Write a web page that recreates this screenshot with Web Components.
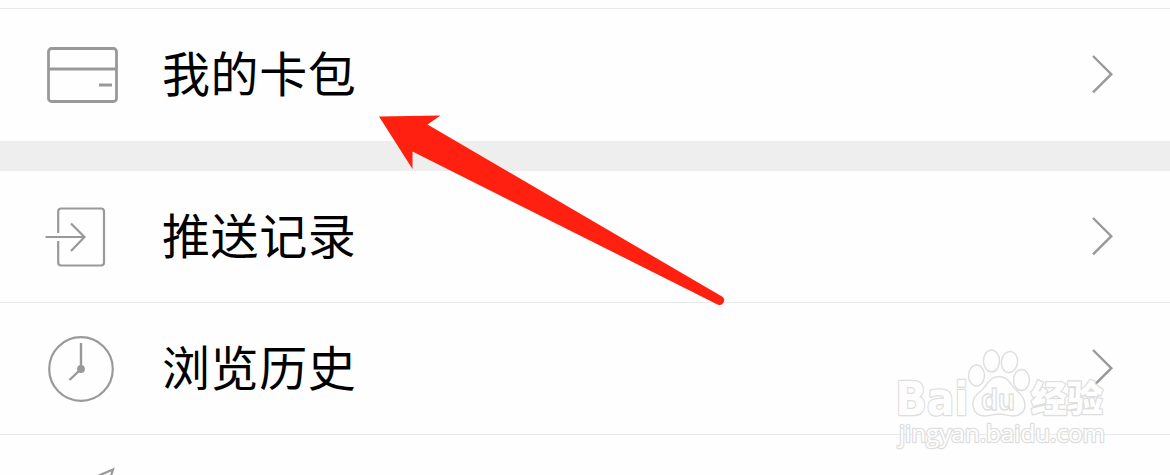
<!DOCTYPE html>
<html lang="zh-CN">

<head>
    <meta charset="UTF-8">
    <meta name="viewport" content="width=device-width, initial-scale=1.0">
    <title>我的卡包</title>
    <style>
        body {
            margin: 0;
            height: 475px;
            overflow: hidden;
            position: relative;
            background: #fefefe;
            color: #000;
            font: 48px "Noto Sans CJK SC", sans-serif;
        }
    </style>
</head>

<body>
    <menu-list>
        <menu-group>
            <menu-row></menu-row>
            <menu-row icon="card">我的卡包</menu-row>
        </menu-group>
        <menu-group>
            <menu-row icon="push">推送记录</menu-row>
            <menu-row icon="clock">浏览历史</menu-row>
            <menu-row icon="plane"></menu-row>
        </menu-group>
    </menu-list>
    <red-arrow></red-arrow>
    <site-mark></site-mark>

    <script>
        // ==================================================================== icons, all on an 80x80 canvas
        const ICONS = {
            card: `<rect x="8.5" y="13.5" width="68" height="53" rx="3"/><path d="M8 34H77M59 50H72"/>`,
            push: `<path stroke-width="2.2" d="M18.2 36V14.5a3 3 0 0 1 3-3H61a3 3 0 0 1 3 3V65.500a3 3 0 0 1-3 3H21.200a3 3 0 0 1-3-3V44M5.500 40H44M31 26.500L44.500 40L31 54"/>`,
            clock: `<circle cx="41" cy="40" r="31.800" stroke-width="2.2"/><path stroke-width="2.4" d="M41 14V40L29.500 51"/><circle cx="41" cy="40" r="2.500" fill="#999"/>`,
            plane: `<path stroke-width="2.2" d="M46 46L73 34.500L68.500 49"/>`,
        };
        // ==================================================================== base class
        class ShadowElement extends HTMLElement {
            draw(html) {
                this.attachShadow({ mode: 'open' }).innerHTML = html;
            }
        }
        // ==================================================================== <menu-list>
        customElements.define('menu-list', class extends ShadowElement {
            connectedCallback() {
                this.draw(
                    `<style>:host{display:flex;flex-direction:column;gap:30px;background:#eee}</style>` +
                    `<slot></slot>`
                );
            }
        });
        // ==================================================================== <menu-group>
        customElements.define('menu-group', class extends ShadowElement {
            connectedCallback() {
                this.draw(
                    `<style>` +
                    `:host{display:block;background:#fefefe}` +
                    `::slotted(menu-row:not(:last-child)){border-bottom:1px solid #e9e9e9}` +
                    `</style><slot></slot>`
                );
            }
        });
        // ==================================================================== <menu-row>
        // a row without an icon is only the tail of the row above the fold, "plane" is cut off at the bottom
        customElements.define('menu-row', class extends ShadowElement {
            connectedCallback() {
                const icon = ICONS[this.getAttribute('icon')];
                const label = this.textContent.trim();
                this.draw(
                    `<style>` +
                    `:host{display:flex;align-items:center;box-sizing:border-box;height:132px;padding:0 56px 0 40px}` +
                    `:host(:not([icon])){height:9px}` +
                    `:host([icon=plane]){height:40px;align-items:flex-start;overflow:hidden}` +
                    `svg{display:block;flex:none;fill:none;stroke:#999;stroke-width:2.8}` +
                    `.icon{width:80px;height:80px}` +
                    `.label{flex:1;margin-left:42px;padding-bottom:8px;line-height:72px;letter-spacing:.6px}` +
                    `</style>` +
                    (icon ? `<svg class="icon" viewBox="0 0 80 80">${icon}</svg>` : ``) +
                    (label ? `<span class="label"><slot></slot></span>` +
                        `<svg width="24" height="42" viewBox="0 0 24 42"><path stroke-width="2.4" d="M3 2L21.300 20.200L3 38.300"/></svg>` : ``)
                );
            }
        });
        // ==================================================================== <red-arrow>
        customElements.define('red-arrow', class extends ShadowElement {
            connectedCallback() {
                this.draw(
                    `<style>:host{position:absolute;left:370px;top:105px}svg{display:block}</style>` +
                    `<svg width="360" height="210" viewBox="370 105 360 210">` +
                    `<path fill="#ff2010" d="M379 116.500L440.500 115.500L427.500 124.500L722 296.500A4.600 4.600 0 0 1 717.500 304.500L412.500 151.500V169Z"/>` +
                    `</svg>`
                );
            }
        });
        // ==================================================================== <site-mark>
        customElements.define('site-mark', class extends ShadowElement {
            connectedCallback() {
                this.draw(
                    `<style>` +
                    `:host{position:absolute;left:880px;top:335px}` +
                    `svg{display:block;fill:#fefefe;stroke:#dedede;stroke-width:1.4;stroke-linejoin:round}` +
                    `text{font-family:"Open Sans","Noto Sans",sans-serif;paint-order:stroke;stroke-width:2.6}` +
                    `.bold{font-family:"DejaVu Sans",Verdana,sans-serif;font-weight:700}` +
                    `.du{font-family:"Liberation Sans",Arial,sans-serif;font-weight:700;paint-order:normal;stroke-width:1.4}` +
                    `.cjk{font-family:"Noto Sans CJK SC",sans-serif;font-weight:900}` +
                    `</style>` +
                    `<svg width="240" height="140">` +
                    `<text class="bold" x="15.500" y="79.500" font-size="46" textLength="73" lengthAdjust="spacingAndGlyphs">Bai</text>` +
                    `<ellipse cx="96.500" cy="40.500" rx="8" ry="10.500"/>` +
                    `<ellipse cx="111.500" cy="26" rx="8" ry="11"/>` +
                    `<ellipse cx="129.500" cy="27" rx="8" ry="10.500" transform="rotate(8 129.500 27)"/>` +
                    `<ellipse cx="141.500" cy="45" rx="8" ry="10.500"/>` +
                    `<path d="M119 41.500C109 41.500 107 51 101 56C95 60 92 65 93 71C94 78 99 81 105 81C111 81 114 79 119 79C124 79 127 81 133 81C140 81 145 77 145 70C145 64 142 60 137 56C131 51 129 41.500 119 41.500Z"/>` +
                    `<text class="du" x="101" y="75" font-size="30" textLength="34" lengthAdjust="spacingAndGlyphs">du</text>` +
                    `<text class="cjk" x="151" y="77" font-size="36" textLength="72" lengthAdjust="spacingAndGlyphs">经验</text>` +
                    `<text x="19" y="107" font-size="24.500" textLength="206" lengthAdjust="spacingAndGlyphs">jingyan.baidu.com</text>` +
                    `</svg>`
                );
            }
        });
    </script>
</body>

</html>
